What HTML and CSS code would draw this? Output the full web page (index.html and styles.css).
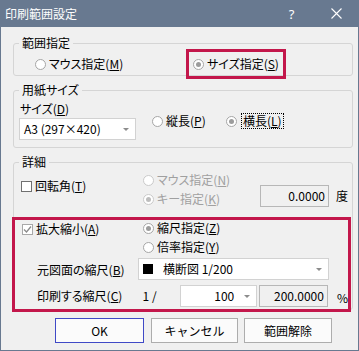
FILE: index.html
```html
<!DOCTYPE html>
<html>
<head>
	<title>印刷範囲設定</title>
	<meta charset="utf-8">
	<link rel="stylesheet" href="styles.css">
</head>
<body>
<div class="window">
	<div class="titlebar">
		<span class="title">印刷範囲設定</span>
		<span class="tbtn">?</span>
		<span class="tbtn">
			<svg width="11" height="11" viewBox="0 0 11 11"><path d="M0.5 0.5 L10.5 10.5 M10.5 0.5 L0.5 10.5" stroke="#fff" stroke-width="1.1" fill="none"/></svg>
		</span>
	</div>

	<div class="content">
		<fieldset class="group">
			<legend>範囲指定</legend>
			<div class="range">
				<label class="radio w158"><span class="rb"></span>マウス指定(<u>M</u>)</label>
				<label class="radio mark"><span class="rb on"></span>サイズ指定(<u>S</u>)</label>
			</div>
		</fieldset>

		<fieldset class="group paper">
			<legend>用紙サイズ</legend>
			<div class="paper-row">
				<div class="size-col">
					<div>サイズ(<u>D</u>)</div>
					<div class="combo size-combo"><span class="val">A3 (297×420)</span><span class="arrow"></span></div>
				</div>
				<label class="radio orient w74"><span class="rb"></span>縦長(<u>P</u>)</label>
				<label class="radio orient"><span class="rb on"></span><span class="focus">横長(<u>L</u>)</span></label>
			</div>
		</fieldset>

		<fieldset class="group detail">
			<legend>詳細</legend>
			<div class="detail-in">
				<div class="rot-row">
					<label class="check rot"><span class="cb"></span>回転角(<u>T</u>)</label>
					<div class="radios">
						<label class="radio off"><span class="rb"></span>マウス指定(<u>N</u>)</label>
						<label class="radio off"><span class="rb on"></span>キー指定(<u>K</u>)</label>
					</div>
					<div class="field angle">0.0000</div>
					<span class="unit deg">度</span>
				</div>

				<div class="mark-box">
					<div class="scale-row">
						<label class="check scale"><span class="cb on"><svg width="9" height="9" viewBox="0 0 9 9"><path d="M1 4.5 L3.5 7 L8 1.5" stroke="#8a8a8a" stroke-width="1.3" fill="none"/></svg></span>拡大縮小(<u>A</u>)</label>
						<div class="radios">
							<label class="radio"><span class="rb on"></span>縮尺指定(<u>Z</u>)</label>
							<label class="radio"><span class="rb"></span>倍率指定(<u>Y</u>)</label>
						</div>
					</div>
					<div class="line-row base">
						<span class="lbl w101">元図面の縮尺(<u>B</u>)</span>
						<div class="combo base-combo"><span class="swatch"></span><span class="val">横断図 1/200</span><span class="arrow"></span></div>
					</div>
					<div class="line-row print">
						<span class="lbl w106">印刷する縮尺(<u>C</u>)</span>
						<span class="lbl w38">1 /</span>
						<div class="combo num-combo"><span class="val num">100</span><span class="arrow"></span></div>
						<div class="field ratio">200.0000</div>
						<span class="unit pct">%</span>
					</div>
				</div>
			</div>
		</fieldset>

		<div class="buttons">
			<button class="btn ok">OK</button>
			<button class="btn cancel">キャンセル</button>
			<button class="btn clear">範囲解除</button>
		</div>
	</div>
</div>
</body>
</html>
```

FILE: styles.css
```css
body {
    margin: 0;
    font-family: "Noto Sans CJK JP", "Noto Sans", sans-serif;
    font-feature-settings: "palt";
    font-size: 12px;
    line-height: 16px;
    color: #000;
    background: #fff;
}
u {
    text-underline-offset: 1px;
}
.window {
    width: 359px;
    height: 351px;
    display: flex;
    flex-direction: column;
}
.titlebar {
    height: 27px;
    background: #687990;
    color: #fff;
    display: flex;
    align-items: center;
    padding-left: 5px;
    flex: none;
}
.title {
    flex: 1;
}
.tbtn {
    width: 45px;
    height: 27px;
    display: flex;
    align-items: center;
    justify-content: center;
    font-family: "Noto Sans", sans-serif;
    font-size: 13px;
}
.content {
    flex: 1;
    background: #f0f0f0;
    border: 1px solid #687990;
    border-top: none;
    padding: 8px 5px 0 12px;
}

/* group boxes */
.group {
    margin: 0;
    padding: 0;
    min-width: 0;
    border: 1px solid #d5d5d5;
    border-radius: 3px;
}
.group legend {
    margin-left: 5px;
    padding: 0 3px;
    line-height: 16px;
}
.paper, .detail {
    margin-top: 6px;
}

/* radios and checks */
.radio, .check {
    display: inline-flex;
    align-items: center;
    height: 16px;
    white-space: nowrap;
}
.rb {
    width: 11px;
    height: 11px;
    box-sizing: border-box;
    border: 1px solid #a6a6a6;
    border-radius: 50%;
    background: #fff;
    margin-right: 3px;
    display: flex;
    align-items: center;
    justify-content: center;
    flex: none;
}
.rb.on::after {
    content: "";
    width: 5px;
    height: 5px;
    border-radius: 50%;
    background: #9c9c9c;
}
.radio.off {
    color: #a0a0a0;
}
.radio.off .rb {
    border-color: #cacaca;
}
.radio.off .rb.on::after {
    background: #bdbdbd;
}
.cb {
    width: 11px;
    height: 11px;
    box-sizing: border-box;
    border: 1px solid #707070;
    background: #fff;
    margin-right: 3px;
    display: flex;
    align-items: center;
    justify-content: center;
    flex: none;
}
.cb.on {
    border-color: #a8a8a8;
}
.w158 { width: 158px; }
.w74 { width: 74px; }
.w101 { width: 101px; }
.w106 { width: 106px; }
.w38 { width: 38px; }

.mark {
    outline: 3px solid #c3174b;
    outline-offset: 4px;
}

.range {
    padding: 5px 0 3px 21px;
    display: flex;
}

/* paper */
.paper-row {
    display: flex;
    padding: 3px 0 7px 6px;
}
.orient {
    margin-top: 12px;
}
.focus {
    border: 1px dotted #000;
    line-height: 14px;
    padding: 0 1px;
    margin-left: 1px;
}

/* inputs */
.combo {
    height: 22px;
    box-sizing: border-box;
    border: 1px solid #d2d2d2;
    background: #fff;
    display: flex;
    align-items: center;
    padding: 0 6px 0 4px;
}
.combo .val {
    flex: 1;
}
.combo .num {
    text-align: right;
    padding-right: 10px;
}
.arrow {
    width: 0;
    height: 0;
    border-left: 3px solid transparent;
    border-right: 3px solid transparent;
    border-top: 3px solid #8c8c8c;
}
.size-combo {
    margin: 1px 0 0 -1px;
    width: 117px;
    margin-right: 16px;
}
.field {
    height: 22px;
    box-sizing: border-box;
    border: 1px solid #b7b7b7;
    background: #f0f0f0;
    text-align: right;
    padding: 2px 3px 0 0;
    width: 69px;
}
.swatch {
    width: 10px;
    height: 10px;
    background: #000;
    margin-right: 10px;
    flex: none;
}

/* detail */
.detail-in {
    padding: 2px 0 0 7px;
}
.rot-row {
    display: flex;
    align-items: flex-start;
}
.rot {
    width: 122px;
    margin-top: 6px;
}
.radios {
    display: flex;
    flex-direction: column;
    gap: 3px;
    width: 117px;
}
.angle {
    margin-top: 13px;
}
.deg {
    margin: 16px 0 0 7px;
}
.mark-box {
    border: 3px solid #c3174b;
    margin: 10px 1px -3px -9px;
    padding: 0 0 2px 7px;
}
.scale-row {
    display: flex;
    align-items: flex-start;
}
.scale {
    width: 121px;
    margin-top: 1px;
}
.line-row {
    display: flex;
    align-items: center;
}
.base {
    margin-top: 3px;
}
.base .lbl {
    margin: 2px 0 0 15px;
}
.base-combo {
    width: 191px;
}
.print {
    margin-top: 5px;
}
.print .lbl:first-child {
    margin-left: 15px;
}
.num-combo {
    width: 77px;
    margin-right: 2px;
}
.pct {
    margin: 4px 0 0 9px;
}

/* buttons */
.buttons {
    display: flex;
    gap: 7px;
    margin-top: 8px;
    padding-left: 42px;
}
.btn {
    height: 25px;
    font-family: inherit;
    font-size: 12px;
    background: #fbfbfb;
    border: 1px solid #adadad;
    padding: 0;
    color: #000;
}
.ok {
    width: 89px;
    border-color: #3f49c6;
}
.cancel {
    width: 87px;
}
.clear {
    width: 88px;
    margin-left: -1px;
}
```
